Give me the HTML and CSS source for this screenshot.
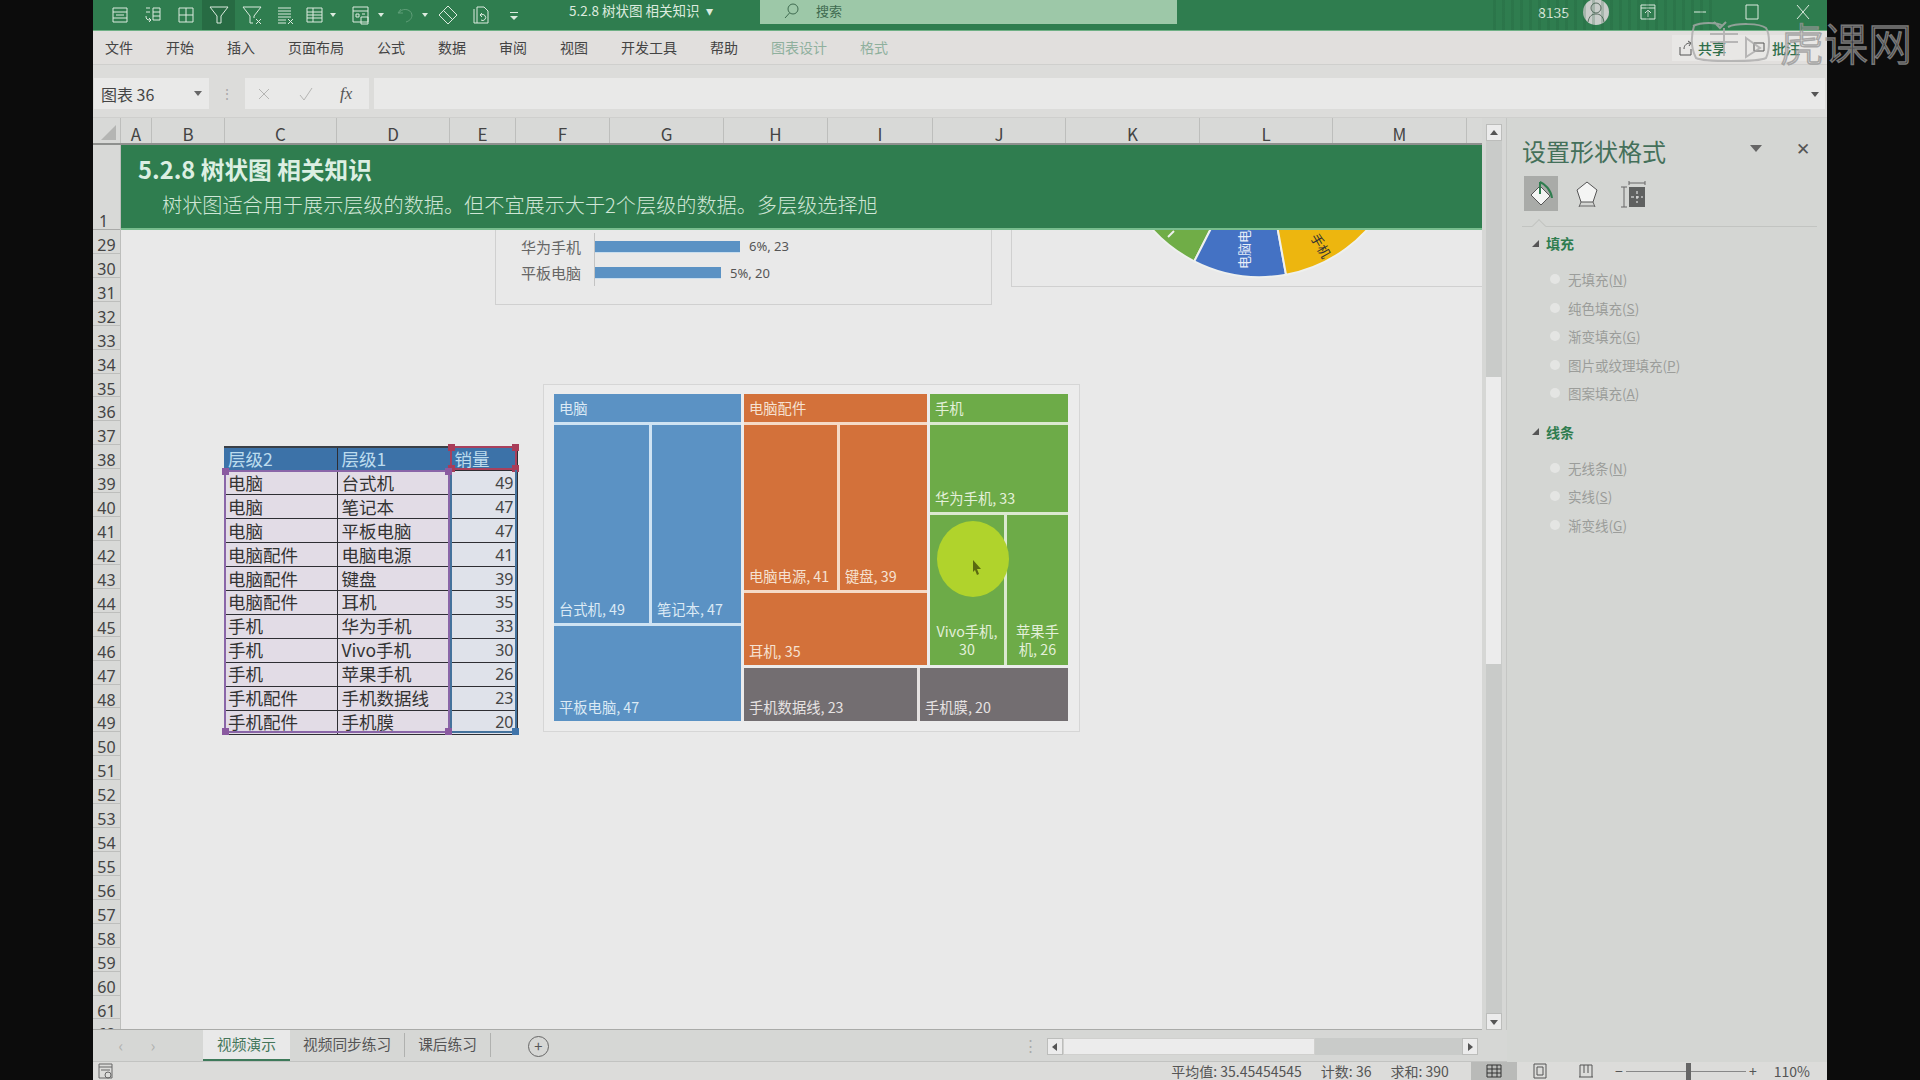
FILE: index.html
```html
<!DOCTYPE html>
<html>
<head>
  <title>5.2.8 树状图 相关知识</title>
  <link rel="stylesheet" href="styles.css">
</head>
<body>
  <div class="app">
    <!-- title bar -->
    <div class="titlebar">
      <div class="title-art"></div>
      <div class="qa"><svg width="20" height="20" viewBox="0 0 20 20"><path d="M3 3h14v14H3zM3 7h14M3 13h14M6 10h8" /></svg></div>
      <div class="qa"><svg width="20" height="20" viewBox="0 0 20 20"><path d="M10 3h7v12h-7zM10 7h7M10 11h7M3 3h4M3 7h4M3 11c0 3 1 4 4 4M6 13l2 2-2 2" /></svg></div>
      <div class="qa"><svg width="20" height="20" viewBox="0 0 20 20"><path d="M3 3h14v14H3zM10 3v14M3 10h14" /></svg></div>
      <div class="qa qa-on"><svg width="22" height="22" viewBox="0 0 22 22"><path d="M2 3h18l-7 9v7H9v-7z" /></svg></div>
      <div class="qa"><svg width="22" height="22" viewBox="0 0 22 22"><path d="M2 3h18l-7 9v2M9 12v7h3M2 3l7 9M15 15l5 5M20 15l-5 5" /></svg></div>
      <div class="qa"><svg width="20" height="20" viewBox="0 0 20 20"><path d="M3 3h13M3 6h13M3 9h13M3 12h13M3 15h8M3 18h8M13 14l5 5M18 14l-5 5" /></svg></div>
      <div class="qa qa-wide"><svg width="20" height="20" viewBox="0 0 20 20"><path d="M3 3h15v14H3zM3 7h15M3 10h15M3 13h15M9 3v14" /></svg><span class="qa-arrow"></span></div>
      <div class="qa qa-wide"><svg width="22" height="22" viewBox="0 0 22 22"><path d="M3 3h15v15H3zM3 7h15M6 10h3v3H6zM12 10h3M11 13h7v7h-7z" /></svg><span class="qa-arrow"></span></div>
      <div class="qa qa-wide qa-off"><svg width="20" height="20" viewBox="0 0 20 20"><path d="M5 4l-3 4h5M3 8c2-5 12-5 13 2 0 4-3 6-6 7" /></svg><span class="qa-arrow"></span></div>
      <div class="qa qa-back"><svg width="22" height="22" viewBox="0 0 22 22"><path d="M11 2l9 9-9 9-9-9zM7 7l9 9" /></svg></div>
      <div class="qa"><svg width="20" height="22" viewBox="0 0 20 22"><path d="M6 3h7l4 4v12H6zM3 5v14h3M10 11a3 3 0 1 1 0 5M11 9l-2 2 2 2" /></svg></div>
      <div class="qa"><span class="qa-more"></span></div>
      <div class="doc-title">5.2.8 树状图 相关知识<span class="doc-caret">▾</span></div>
      <div class="search">
        <svg width="18" height="18" viewBox="0 0 18 18"><circle cx="11" cy="7" r="5" /><path d="M7.5 11L3 16" /></svg>
        <span>搜索</span>
      </div>
      <div class="win-controls">
        <span class="user-no">8135</span>
        <span class="avatar"><svg width="26" height="26" viewBox="0 0 26 26"><circle cx="13" cy="9" r="5" /><path d="M5 23c1-6 4-8 8-8s7 2 8 8" /></svg></span>
        <span class="win-btn"><svg width="18" height="16" viewBox="0 0 18 16"><path d="M2 1h14v14H2zM2 4h14M9 13V7M6 9l3-3 3 3" /></svg></span>
        <span class="win-btn"><svg width="14" height="14" viewBox="0 0 14 14"><path d="M1 7h12" /></svg></span>
        <span class="win-btn"><svg width="14" height="16" viewBox="0 0 14 16"><path d="M1 1h12v14H1z" /></svg></span>
        <span class="win-btn win-last"><svg width="14" height="16" viewBox="0 0 14 16"><path d="M1 1l12 14M13 1L1 15" /></svg></span>
      </div>
    </div>

    <!-- ribbon tabs -->
    <div class="menubar">
      <span>文件</span><span>开始</span><span>插入</span><span>页面布局</span><span>公式</span><span>数据</span><span>审阅</span><span>视图</span><span>开发工具</span><span>帮助</span>
      <span class="menu-ctx">图表设计</span><span class="menu-ctx">格式</span>
      <div class="share-box">
        <svg width="16" height="16" viewBox="0 0 16 16"><path d="M2 7v8h11V9M6 9c0-4 3-6 6-6M10 1l3 2-2 3" /></svg>
        <b class="share-a">共享</b>
        <svg width="14" height="14" viewBox="0 0 14 14"><path d="M2 2h10v8H2z" /></svg>
        <b class="share-b">批注</b>
      </div>
    </div>

    <!-- formula bar -->
    <div class="formula">
      <div class="name-box"><span>图表 36</span><i class="caret"></i></div>
      <div class="formula-dots">⋮</div>
      <div class="fx-box">
        <svg width="16" height="16" viewBox="0 0 16 16"><path d="M3 3l10 10M13 3L3 13" /></svg>
        <svg width="18" height="16" viewBox="0 0 18 16"><path d="M3 9l4 5 8-12" /></svg>
        <em>fx</em>
      </div>
      <div class="formula-input"><i class="chev"></i></div>
    </div>

    <div class="main">
      <div class="left">
        <div class="book">
          <div class="sheet">
            <div class="col-heads">
              <div class="corner"><i></i></div>
              <div class="col w-a">A</div><div class="col w-b">B</div><div class="col w-c">C</div><div class="col w-d">D</div><div class="col w-e">E</div><div class="col w-f">F</div><div class="col w-g">G</div><div class="col w-h">H</div><div class="col w-i">I</div><div class="col w-j">J</div><div class="col w-k">K</div><div class="col w-l">L</div><div class="col w-m">M</div>
            </div>
            <div class="sheet-body">
              <div class="row-heads">
                <div class="row-one">1</div>
                <div>29</div><div>30</div><div>31</div><div>32</div><div>33</div><div>34</div><div>35</div><div>36</div><div>37</div><div>38</div><div>39</div><div>40</div><div>41</div><div>42</div><div>43</div><div>44</div><div>45</div><div>46</div><div>47</div><div>48</div><div>49</div><div>50</div><div>51</div><div>52</div><div>53</div><div>54</div><div>55</div><div>56</div><div>57</div><div>58</div><div>59</div><div>60</div><div>61</div><div>62</div>
              </div>
              <div class="cells">
                <div class="banner">
                  <h1>5.2.8 树状图 相关知识</h1>
                  <p>树状图适合用于展示层级的数据。但不宜展示大于2个层级的数据。多层级选择旭</p>
                </div>
                <div class="canvas">
                  <div class="bar-chart">
                    <div class="bar-row"><span class="bar-name">华为手机</span><div class="bar-track"><div class="bar" style="width:145px"></div><span class="bar-val">6%, 23</span></div></div>
                    <div class="bar-row"><span class="bar-name">平板电脑</span><div class="bar-track"><div class="bar" style="width:126px"></div><span class="bar-val">5%, 20</span></div></div>
                  </div>

                  <div class="pie-chart">
                    <svg width="280" height="100" viewBox="1120 190 280 100">
                      <path class="pie-g" d="M1260 132L1132 200A145 145 0 0 0 1194.3 261.3Z" />
                      <path class="pie-b" d="M1260 132L1194.3 261.3A145 145 0 0 0 1286 274.7Z" />
                      <path class="pie-y" d="M1260 132L1286 274.7A145 145 0 0 0 1388 200Z" />
                      <path class="pie-tick" d="M1168 237l6-6" />
                      <text class="pie-w" transform="translate(1249 269) rotate(-90)">电脑电</text>
                      <text class="pie-k" transform="translate(1310 237) rotate(60)">手机</text>
                    </svg>
                  </div>

                  <table class="data">
                    <tr class="data-head"><th class="c1">层级2</th><th class="c2">层级1</th><th class="c3">销量</th></tr>
                    <tr><td class="c1">电脑</td><td class="c2">台式机</td><td class="c3">49</td></tr>
                    <tr><td class="c1">电脑</td><td class="c2">笔记本</td><td class="c3">47</td></tr>
                    <tr><td class="c1">电脑</td><td class="c2">平板电脑</td><td class="c3">47</td></tr>
                    <tr><td class="c1">电脑配件</td><td class="c2">电脑电源</td><td class="c3">41</td></tr>
                    <tr><td class="c1">电脑配件</td><td class="c2">键盘</td><td class="c3">39</td></tr>
                    <tr><td class="c1">电脑配件</td><td class="c2">耳机</td><td class="c3">35</td></tr>
                    <tr><td class="c1">手机</td><td class="c2">华为手机</td><td class="c3">33</td></tr>
                    <tr><td class="c1">手机</td><td class="c2">Vivo手机</td><td class="c3">30</td></tr>
                    <tr><td class="c1">手机</td><td class="c2">苹果手机</td><td class="c3">26</td></tr>
                    <tr><td class="c1">手机配件</td><td class="c2">手机数据线</td><td class="c3">23</td></tr>
                    <tr><td class="c1">手机配件</td><td class="c2">手机膜</td><td class="c3">20</td></tr>
                  </table>
                  <div class="sel sel-red"><i class="h tl"></i><i class="h tr"></i><i class="h bl"></i><i class="h br"></i></div>
                  <div class="sel sel-blue"><i class="h br"></i></div>
                  <div class="sel sel-purple"><i class="h tl"></i><i class="h tr"></i><i class="h bl"></i><i class="h br"></i></div>

                  <div class="treemap">
                    <div class="tm-col tm-blue">
                      <div class="tm-head">电脑</div>
                      <div class="tm-row tm-r1">
                        <div class="tm-leaf tm-grow95">台式机, 49</div>
                        <div class="tm-leaf tm-fill">笔记本, 47</div>
                      </div>
                      <div class="tm-leaf tm-fill">平板电脑, 47</div>
                    </div>
                    <div class="tm-right">
                      <div class="tm-top">
                        <div class="tm-col tm-orange">
                          <div class="tm-head">电脑配件</div>
                          <div class="tm-row tm-r2">
                            <div class="tm-leaf tm-grow93">电脑电源, 41</div>
                            <div class="tm-leaf tm-fill">键盘, 39</div>
                          </div>
                          <div class="tm-leaf tm-fill">耳机, 35</div>
                        </div>
                        <div class="tm-col tm-green">
                          <div class="tm-head">手机</div>
                          <div class="tm-leaf tm-r3">华为手机, 33</div>
                          <div class="tm-row tm-fill">
                            <div class="tm-leaf tm-center tm-grow74">Vivo手机,<br>30</div>
                            <div class="tm-leaf tm-center tm-fill">苹果手<br>机, 26</div>
                          </div>
                        </div>
                      </div>
                      <div class="tm-row tm-gray">
                        <div class="tm-leaf tm-grow173">手机数据线, 23</div>
                        <div class="tm-leaf tm-fill">手机膜, 20</div>
                      </div>
                    </div>
                  </div>
                  <div class="cursor-glow"><svg width="12" height="16" viewBox="0 0 12 16"><path d="M2 1l8 9H6l2 5-2 1-2-5-2 2z" /></svg></div>
                </div>
              </div>
            </div>
          </div>
          <div class="vscroll">
            <div class="vs-btn"><i class="tri-up"></i></div>
            <div class="vs-track"><div class="vs-thumb"></div></div>
            <div class="vs-btn"><i class="tri-down"></i></div>
          </div>
        </div>

        <div class="tabbar">
          <span class="tab-nav">‹</span><span class="tab-nav">›</span>
          <div class="tab tab-on">视频演示</div>
          <div class="tab">视频同步练习</div>
          <div class="tab">课后练习</div>
          <div class="tab-add">+</div>
          <div class="tab-dots">⋮</div>
          <div class="hscroll">
            <div class="hs-btn"><i class="tri-left"></i></div>
            <div class="hs-thumb"></div>
            <div class="hs-track"></div>
            <div class="hs-btn"><i class="tri-right"></i></div>
          </div>
        </div>
      </div>

      <!-- format pane -->
      <div class="pane">
        <div class="pane-head">
          <h2>设置形状格式</h2>
          <i class="pane-menu"></i>
          <span class="pane-close">✕</span>
        </div>
        <div class="pane-icons">
          <div class="pi pi-on"><svg width="28" height="28" viewBox="0 0 28 28"><path class="fill-w" d="M13 6l10 10-9 9-10-10z" /><path class="line-g" d="M13 2v12M13 2c5 2 11 8 12 16" /></svg></div>
          <div class="pi"><svg width="26" height="30" viewBox="0 0 26 30"><path class="fill-w" d="M13 3l10 8-4 12H7L3 11z" /><path class="line-d" d="M7 23l-2 5M19 23l2 5M5 27h16" /></svg></div>
          <div class="pi"><svg width="28" height="28" viewBox="0 0 28 28"><rect class="fill-d" x="10" y="7" width="16" height="20" /><path class="line-d" d="M10 3h16M10 1v4M26 1v4M2 7h6M2 27h6M5 7v20" /><path class="line-w" d="M18 11v12M12 17h12" /></svg></div>
        </div>
        <div class="pane-rule"><i></i></div>
        <div class="pane-sec"><i class="sec-tri"></i><b>填充</b></div>
        <div class="pane-list">
          <label><i></i>无填充(<u>N</u>)</label>
          <label><i></i>纯色填充(<u>S</u>)</label>
          <label><i></i>渐变填充(<u>G</u>)</label>
          <label><i></i>图片或纹理填充(<u>P</u>)</label>
          <label><i></i>图案填充(<u>A</u>)</label>
        </div>
        <div class="pane-sec sec-two"><i class="sec-tri"></i><b>线条</b></div>
        <div class="pane-list">
          <label><i></i>无线条(<u>N</u>)</label>
          <label><i></i>实线(<u>S</u>)</label>
          <label><i></i>渐变线(<u>G</u>)</label>
        </div>
      </div>
    </div>

    <!-- status bar -->
    <div class="statusbar">
      <svg class="macro" width="18" height="18" viewBox="0 0 18 18"><path d="M2 2h13v14H2zM2 5h13M4 8h9" /><circle cx="11" cy="13" r="3" /></svg>
      <div class="stats"><span>平均值: 35.45454545</span><span>计数: 36</span><span>求和: 390</span></div>
      <div class="view view-on"><svg width="18" height="16" viewBox="0 0 18 16"><path d="M2 2h14v12H2zM2 6h14M2 10h14M7 2v12M12 2v12" /></svg></div>
      <div class="view"><svg width="16" height="16" viewBox="0 0 16 16"><path d="M2 1h12v14H2zM5 4h6v8H5z" /></svg></div>
      <div class="view"><svg width="16" height="16" viewBox="0 0 16 16"><path d="M2 14V2h12v12M6 2v8M10 2v8M1 14h14" /></svg></div>
      <span class="zoom-sign">−</span>
      <div class="zoom-track"><i></i></div>
      <span class="zoom-sign">+</span>
      <span class="zoom-pct">110%</span>
    </div>
  </div>

  <!-- video watermark -->
  <div class="watermark">
    <svg width="84" height="44" viewBox="0 0 84 44"><path d="M3 6c8-4 24-4 30 0M4 6c-3 10-3 22 2 32 8 4 62 4 70 0 4-8 4-24 0-30-6-5-30-5-38-1M24 2l6 6 6-6M20 14h28M20 22h28M34 8v28M56 18l14 10-14 9z" /></svg>
    <span>虎课网</span>
  </div>
</body>
</html>
```

FILE: styles.css
```css
* {
  box-sizing: border-box;
}
body {
  margin: 0;
  width: 1920px;
  height: 1080px;
  overflow: hidden;
  background-color: #0c0c0c;
  font-family: "Noto Sans CJK SC", "Noto Sans", sans-serif;
  color: #444;
  position: relative;
}
svg {
  fill: none;
  stroke: currentColor;
  display: block;
}
.app {
  margin-left: 93px;
  width: 1734px;
  height: 1080px;
  display: flex;
  flex-direction: column;
  background: #dcdcda;
}

/* title bar */
.titlebar {
  height: 31px;
  background: #2f7d4f;
  border-bottom: 1px solid #6fb085;
  color: #dcebdf;
  display: flex;
  align-items: center;
  padding-left: 10px;
  position: relative;
}
.title-art {
  position: absolute;
  left: 1400px;
  top: 0;
  width: 220px;
  height: 30px;
  background: repeating-linear-gradient(90deg, rgba(30,90,55,0.35) 0 3px, transparent 3px 9px);
  opacity: 0.6;
}
.qa {
  width: 33px;
  height: 30px;
  display: flex;
  align-items: center;
  justify-content: center;
  gap: 6px;
  flex: none;
}
.qa-on {
  background: #276b43;
}
.qa-wide {
  width: 46px;
  justify-content: flex-start;
  padding-left: 3px;
}
.qa-off {
  color: #5f9e78;
}
.qa-back {
  margin-left: -8px;
}
.qa-arrow {
  width: 0;
  height: 0;
  border: 3px solid transparent;
  border-top: 4px solid #dcebdf;
  margin-top: 3px;
}
.qa-more {
  width: 8px;
  height: 7px;
  border-top: 1px solid #dcebdf;
  position: relative;
}
.qa-more::after {
  content: "";
  position: absolute;
  left: 0;
  top: 3px;
  border: 4px solid transparent;
  border-top: 4px solid #dcebdf;
}
.doc-title {
  margin-left: 39px;
  width: 191px;
  align-self: flex-start;
  line-height: 20px;
  font-size: 13.5px;
  white-space: nowrap;
}
.doc-caret {
  margin-left: 6px;
}
.search {
  width: 417px;
  height: 24px;
  align-self: flex-start;
  background: #9dc8a8;
  color: #3f6b50;
  display: flex;
  align-items: flex-start;
  gap: 16px;
  padding: 2px 0 0 22px;
  font-size: 13px;
  line-height: 18px;
}
.win-controls {
  margin-left: auto;
  height: 24px;
  align-self: flex-start;
  display: flex;
  align-items: center;
  font-size: 14px;
}
.user-no {
  width: 48px;
}
.avatar {
  width: 26px;
  height: 26px;
  border-radius: 50%;
  background: #c9cdca;
  color: #5b6e62;
  margin-right: 13px;
  margin-left: -3px;
}
.win-btn {
  width: 52px;
  display: flex;
  justify-content: center;
}
.win-last {
  width: 49px;
}

/* ribbon tabs */
.menubar {
  height: 34px;
  background: #e1dfdd;
  display: flex;
  align-items: center;
  gap: 33px;
  padding: 0 0 2px 12px;
  font-size: 14px;
  color: #444;
  border-bottom: 1px solid #cfcfcd;
}
.menu-ctx {
  color: #8fb09d;
}
.share-box {
  margin-left: auto;
  margin-right: 7px;
  width: 148px;
  height: 26px;
  flex: none;
  background: #e8e7e5;
  display: flex;
  align-items: center;
  padding-left: 6px;
  color: #555;
  margin-top: 2px;
  white-space: nowrap;
}
.share-box b {
  color: #2f6e4b;
  font-weight: 500;
}
.share-a {
  margin: 0 26px 0 4px;
}
.share-b {
  margin-left: 6px;
}

/* formula bar */
.formula {
  height: 53px;
  background: #dcdcda;
  display: flex;
  padding: 13px 2px 8px 1px;
  border-bottom: 1px solid #cfcfcd;
}
.name-box {
  width: 115px;
  background: #e9e9e8;
  display: flex;
  align-items: center;
  justify-content: space-between;
  padding: 0 7px;
  font-size: 16px;
}
.caret {
  border: 4px solid transparent;
  border-top: 5px solid #666;
  margin-top: 4px;
}
.formula-dots {
  width: 36px;
  text-align: center;
  color: #aaa;
  line-height: 30px;
  font-size: 14px;
}
.fx-box {
  width: 124px;
  background: #e9e9e8;
  display: flex;
  align-items: center;
  gap: 25px;
  padding: 0 0 0 11px;
  color: #b5b5b3;
}
.fx-box em {
  color: #555;
  font-family: "Liberation Serif", serif;
  font-size: 17px;
}
.formula-input {
  flex: 1;
  margin-left: 5px;
  background: #e9e9e8;
  display: flex;
  align-items: center;
  justify-content: flex-end;
  padding-right: 6px;
}
.chev {
  border: 4px solid transparent;
  border-top: 5px solid #555;
  margin-top: 5px;
}

/* sheet */
.main {
  flex: 1;
  display: flex;
  min-height: 0;
}
.left {
  width: 1414px;
  display: flex;
  flex-direction: column;
}
.book {
  height: 912px;
  display: flex;
}
.sheet {
  width: 1389px;
  display: flex;
  flex-direction: column;
  background: #e9e9e9;
  border-bottom: 1px solid #a9aaa8;
}
.col-heads {
  height: 27px;
  flex: none;
  display: flex;
  background: #d8d9d7;
  border-bottom: 2px solid #8e908e;
  overflow: hidden;
}
.corner {
  width: 28px;
  flex: none;
  position: relative;
  border-right: 1px solid #bdbebc;
}
.corner i {
  position: absolute;
  right: 4px;
  bottom: 3px;
  border-left: 15px solid transparent;
  border-bottom: 15px solid #b4b5b3;
}
.col {
  flex: none;
  text-align: center;
  font-size: 17px;
  padding-top: 6px;
  line-height: 19px;
  color: #444;
  border-right: 1px solid #bdbebc;
}
.w-a { width: 31px; }
.w-b { width: 73px; }
.w-c { width: 112px; }
.w-d { width: 113px; }
.w-e { width: 66px; }
.w-f { width: 94px; }
.w-g { width: 114px; }
.w-h { width: 104px; }
.w-i { width: 105px; }
.w-j { width: 133px; }
.w-k { width: 134px; }
.w-l { width: 133px; }
.w-m { width: 134px; }
.sheet-body {
  flex: 1;
  display: flex;
  min-height: 0;
}
.row-heads {
  width: 28px;
  flex: none;
  background: #d8d9d7;
  border-right: 1px solid #bdbebc;
  overflow: hidden;
  font-family: "Noto Sans", sans-serif;
  font-size: 16px;
  color: #444;
}
.row-heads div {
  height: 23.93px;
  padding-top: 7px;
  line-height: 16px;
  text-align: center;
  border-bottom: 1px solid #bdbebc;
}
.row-heads .row-one {
  height: 85px;
  display: flex;
  align-items: flex-end;
  padding: 0 0 0 6px;
  line-height: 16px;
  border-bottom: 1px solid #a9aaa8;
}
.cells {
  flex: 1;
  display: flex;
  flex-direction: column;
  min-width: 0;
}
.banner {
  height: 85px;
  flex: none;
  background: #2f7d4f;
  border-bottom: 2px solid #78bd8e;
  padding: 6px 0 0 17px;
  color: #dcefe2;
}
.banner h1 {
  margin: 0;
  font-size: 23.7px;
  font-weight: 700;
  line-height: 36px;
}
.banner p {
  margin: 0;
  padding-left: 24px;
  font-size: 20.15px;
  line-height: 36px;
  color: #cfe6d6;
  font-weight: 300;
}
.canvas {
  flex: 1;
  position: relative;
  overflow: hidden;
}

/* charts */
.bar-chart {
  position: absolute;
  left: 374px;
  top: -20px;
  width: 497px;
  height: 95px;
  border: 1px solid #d0d0d0;
  padding: 22px 0 0 25px;
  background: #e9e9e9;
}
.bar-row {
  display: flex;
  height: 26.5px;
  align-items: center;
}
.bar-name {
  width: 60px;
  font-size: 15px;
  color: #666;
  margin-right: 13px;
  white-space: nowrap;
}
.bar-track {
  height: 26.5px;
  flex: 1;
  display: flex;
  align-items: center;
  border-left: 1px solid #c3c3c3;
}
.bar {
  height: 11px;
  background: #5b92c4;
  box-shadow: 0 1px 0 #c9deef;
}
.bar-val {
  margin-left: 9px;
  font-size: 13px;
  color: #555;
  font-family: "Noto Sans", sans-serif;
}
.pie-chart {
  position: absolute;
  left: 890px;
  top: -20px;
  width: 500px;
  height: 77px;
  border: 1px solid #d0d0d0;
  background: #e9e9e9;
}
.pie-chart svg {
  position: absolute;
  left: 108px;
  top: -21px;
  stroke: #eef0ee;
  stroke-width: 2;
}
.pie-g { fill: #70ad47; }
.pie-b { fill: #4472c4; }
.pie-y { fill: #edb60f; }
.pie-w, .pie-k {
  stroke: none;
  font-size: 13px;
}
.pie-w { fill: #e8eef8; }
.pie-k { fill: #333; }

/* data table */
.data {
  position: absolute;
  left: 103px;
  top: 216px;
  width: 293px;
  height: 287px;
  border-collapse: collapse;
  table-layout: fixed;
  font-size: 17.5px;
  line-height: 22px;
}
.data th, .data td {
  padding: 0 0 0 4px;
  height: 23.93px;
  text-align: left;
  font-weight: 400;
  overflow: hidden;
  white-space: nowrap;
  border-bottom: 1.5px solid #2e2e33;
  border-right: 1.5px solid #2e2e33;
}
.data th {
  background: #3c72a8;
  color: #bcdcee;
  border-top: 2px solid #3a3f46;
}
.data .c1 { width: 113px; }
.data .c2 { width: 113px; }
.data .c3 { width: 67px; }
.data td.c1, .data td.c2 {
  background: #e2dce6;
  color: #333;
}
.data td.c3 {
  background: #dfe2ea;
  color: #444;
  text-align: right;
  padding: 0 3px 0 0;
  font-size: 16px;
  font-family: "Noto Sans", sans-serif;
}
.sel {
  position: absolute;
  pointer-events: none;
}
.sel-red {
  left: 329px;
  top: 216px;
  width: 67px;
  height: 24px;
  border: 2px solid #a8405c;
}
.sel-blue {
  left: 329px;
  top: 240px;
  width: 67px;
  height: 263px;
  border: 2px solid #44729c;
  border-top: none;
}
.sel-purple {
  left: 103px;
  top: 240px;
  width: 226px;
  height: 263px;
  border: 2px solid #8a66a8;
}
.h {
  position: absolute;
  width: 7px;
  height: 7px;
  background: #8a5aa0;
}
.sel-red .h { background: #a83c58; }
.sel-blue .h { background: #3f74aa; }
.tl { left: -4px; top: -4px; }
.tr { right: -4px; top: -4px; }
.bl { left: -4px; bottom: -4px; }
.br { right: -4px; bottom: -4px; }

/* treemap */
.treemap {
  position: absolute;
  left: 422px;
  top: 154px;
  width: 537px;
  height: 348px;
  background: #ececec;
  border: 1px solid #d6d6d6;
  padding: 9px 11px 10px 10px;
  display: flex;
  gap: 3px;
  font-size: 14.3px;
  line-height: 18px;
}
.tm-col {
  display: flex;
  flex-direction: column;
  gap: 3px;
}
.tm-blue {
  width: 187px;
  background: #cfe3f3;
  color: #dceaf5;
}
.tm-blue .tm-head, .tm-blue .tm-leaf { background: #5b92c4; }
.tm-orange {
  width: 183px;
  background: #f5dac6;
  color: #f6e2d2;
}
.tm-orange .tm-head, .tm-orange .tm-leaf { background: #d3713a; }
.tm-green {
  flex: 1;
  background: #dbe9d0;
  color: #e3f0da;
}
.tm-green .tm-head, .tm-green .tm-leaf { background: #6dab48; }
.tm-head {
  height: 28px;
  flex: none;
  padding: 5px 5px 0;
}
.tm-row {
  display: flex;
  gap: 3px;
}
.tm-r1 { height: 198px; flex: none; }
.tm-r2 { height: 165px; flex: none; }
.tm-r3 { height: 87px; flex: none; }
.tm-leaf {
  display: flex;
  align-items: flex-end;
  padding: 0 5px 5px;
  white-space: nowrap;
}
.tm-fill { flex: 1; min-width: 0; }
.tm-grow95 { width: 95px; flex: none; }
.tm-grow93 { width: 93px; flex: none; }
.tm-grow74 { width: 74px; flex: none; }
.tm-grow173 { width: 173px; flex: none; }
.tm-green .tm-center {
  text-align: center;
  justify-content: center;
  padding: 0 0 7px;
}
.tm-right {
  flex: 1;
  display: flex;
  flex-direction: column;
  gap: 3px;
}
.tm-top {
  height: 271px;
  flex: none;
  display: flex;
  gap: 3px;
}
.tm-gray {
  flex: 1;
  background: #e5e1e1;
  color: #e6e2e2;
}
.tm-gray .tm-leaf { background: #736e71; }
.cursor-glow {
  position: absolute;
  left: 816px;
  top: 291px;
  width: 72px;
  height: 76px;
  border-radius: 50%;
  background: #b0d32c;
  color: #5a6a10;
}
.cursor-glow svg {
  position: absolute;
  left: 34px;
  top: 38px;
  fill: #5a6a10;
  stroke: none;
}

/* scrollbars */
.vscroll {
  width: 25px;
  display: flex;
  flex-direction: column;
  align-items: flex-start;
  padding: 6px 0 0 4px;
  background: #d6d7d5;
  border-right: 1px solid #c5c6c4;
}
.vs-btn {
  width: 16px;
  height: 17px;
  flex: none;
  background: #ececec;
  border: 1px solid #bcbdbb;
  display: flex;
  align-items: center;
  justify-content: center;
}
.vs-track {
  flex: 1;
  width: 16px;
  background: #c9cbc9;
  padding-top: 236px;
}
.vs-thumb {
  width: 15px;
  height: 287px;
  background: #ececec;
}
.tri-up {
  border: 4px solid transparent;
  border-bottom: 5px solid #555;
  margin-top: -5px;
}
.tri-down {
  border: 4px solid transparent;
  border-top: 5px solid #555;
  margin-top: 5px;
}
.tri-left {
  border: 4px solid transparent;
  border-right: 5px solid #555;
  margin-left: -5px;
}
.tri-right {
  border: 4px solid transparent;
  border-left: 5px solid #555;
  margin-left: 5px;
}

/* sheet tabs */
.tabbar {
  flex: 1;
  display: flex;
  background: #d6d7d5;
  font-size: 14.7px;
  color: #555;
  position: relative;
  border-bottom: 1px solid #c2c3c1;
}
.tab-nav {
  width: 32px;
  text-align: center;
  line-height: 30px;
  color: #b0b1af;
  font-size: 16px;
  margin-left: 0;
}
.tab-nav:first-child {
  margin-left: 12px;
}
.tab {
  padding: 0 13px;
  height: 24px;
  margin-top: 3px;
  line-height: 21px;
  border-right: 1px solid #b0b1af;
  white-space: nowrap;
}
.tab-on {
  margin-top: 0;
  margin-left: 34px;
  width: 87px;
  height: 31px;
  padding: 0 6px;
  line-height: 27px;
  background: #e9e9e9;
  color: #44765a;
  border-right: none;
  border-bottom: 2px solid #3e7a5a;
  text-align: center;
}
.tab-add {
  width: 21px;
  height: 21px;
  margin: 6px 0 0 37px;
  border: 1px solid #666;
  border-radius: 50%;
  text-align: center;
  line-height: 17px;
  color: #555;
}
.tab-dots {
  position: absolute;
  left: 930px;
  top: 4px;
  color: #aaa;
}
.hscroll {
  position: absolute;
  left: 954px;
  top: 8px;
  width: 431px;
  height: 17px;
  display: flex;
  background: #c9cbc9;
}
.hs-btn {
  width: 16px;
  background: #ececec;
  border: 1px solid #bcbdbb;
  display: flex;
  align-items: center;
  justify-content: center;
  flex: none;
}
.hs-thumb {
  width: 252px;
  background: #ececec;
  border: 1px solid #d0d0ce;
}
.hs-track {
  flex: 1;
}

/* format pane */
.pane {
  flex: 1;
  background: #d4d6d3;
  padding: 0 10px 0 15px;
  position: relative;
}
.pane-head {
  height: 58px;
  display: flex;
  align-items: center;
  padding-top: 6px;
}
.pane-head h2 {
  margin: 0;
  font-size: 24px;
  font-weight: 400;
  color: #44705a;
  flex: 1;
}
.pane-menu {
  border: 6px solid transparent;
  border-top: 7px solid #666;
  margin: 3px 34px 0 0;
}
.pane-close {
  font-size: 17px;
  color: #555;
  margin-right: 7px;
  margin-top: -6px;
}
.pane-icons {
  display: flex;
  gap: 12px;
  padding-left: 2px;
}
.pi {
  width: 34px;
  height: 35px;
  display: flex;
  align-items: center;
  justify-content: center;
}
.pi-on {
  background: #a9aba8;
}
.fill-w { fill: #f4f5f4; stroke: #555; }
.fill-d { fill: #5f6160; stroke: none; }
.line-g { stroke: #2f7d4f; stroke-width: 2; }
.line-d { stroke: #666; }
.line-w { stroke: #f4f5f4; stroke-dasharray: 3 2; }
.pane-rule {
  height: 1px;
  margin-top: 15px;
  background: #c2c4c1;
  position: relative;
}
.pane-rule i {
  position: absolute;
  left: 12px;
  top: -5px;
  width: 10px;
  height: 10px;
  background: #d4d6d3;
  border-left: 1px solid #c2c4c1;
  border-top: 1px solid #c2c4c1;
  transform: rotate(45deg);
}
.pane-sec {
  display: flex;
  align-items: center;
  height: 32px;
  padding-left: 10px;
  font-size: 14px;
  color: #2f7d4f;
}
.pane-sec b {
  font-weight: 700;
  margin-left: 7px;
}
.sec-tri {
  width: 0;
  height: 0;
  border-left: 7px solid transparent;
  border-bottom: 7px solid #555;
}
.sec-two {
  margin-top: 8px;
}
.pane-list {
  padding: 6px 0 0 26px;
}
.pane-list label {
  display: flex;
  align-items: center;
  height: 28.5px;
  font-size: 13.5px;
  color: #9b9d9a;
}
.pane-list i {
  width: 10px;
  height: 10px;
  border-radius: 50%;
  background: #e4e5e3;
  margin-right: 8px;
  margin-left: 2px;
}

/* status bar */
.statusbar {
  height: 18px;
  flex: none;
  background: #dcdcda;
  display: flex;
  align-items: center;
  font-size: 14px;
  color: #555;
  overflow: hidden;
}
.macro {
  margin-left: 4px;
  color: #666;
}
.stats {
  margin-left: auto;
  display: flex;
  gap: 19px;
  margin-right: 22px;
}
.view {
  width: 46px;
  height: 18px;
  display: flex;
  justify-content: center;
  align-items: center;
  color: #555;
}
.view-on {
  background: #b9bab8;
  color: #333;
}
.zoom-sign {
  width: 14px;
  text-align: center;
}
.zoom-sign:first-of-type {
  margin-left: 3px;
}
.zoom-track {
  width: 120px;
  height: 1px;
  background: #888;
  position: relative;
}
.zoom-track i {
  position: absolute;
  left: 60px;
  top: -8px;
  width: 5px;
  height: 17px;
  background: #666;
}
.zoom-pct {
  margin: 0 17px 0 14px;
}

/* watermark over the picture */
.watermark {
  position: absolute;
  left: 1690px;
  top: 20px;
  display: flex;
  align-items: center;
  gap: 6px;
  color: rgba(170,170,170,0.8);
}
.watermark svg {
  stroke-width: 2;
}
.watermark span {
  font-size: 44px;
  line-height: 44px;
  color: transparent;
  -webkit-text-stroke: 1.5px rgba(150,150,150,0.8);
  font-weight: 300;
  white-space: nowrap;
}
```
